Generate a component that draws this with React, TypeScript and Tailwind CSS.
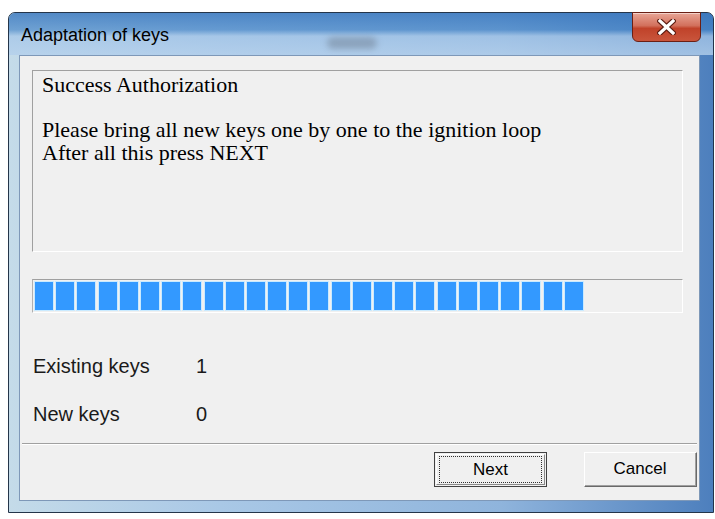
// Win7-style "Adaptation of keys" dialog with segmented progress bar.
import React from "react";

const SEGMENTS = 26;

function CloseButton() {
  return (
    <div className="mr-[12px] mt-[-1px] flex h-[30px] w-[69px] items-center justify-center rounded-b-[6px] border border-[#6b1f14] bg-[linear-gradient(180deg,#e8a596_0%,#d2705c_45%,#c0422a_55%,#c9553c_100%)] shadow-[inset_0_1px_0_rgba(255,255,255,0.5)]">
      <svg width="19" height="16" viewBox="0 0 19 16" aria-hidden>
        <path d="M3 2 L16 14 M16 2 L3 14" stroke="#5a1a10" strokeWidth="5.5" strokeLinecap="square" />
        <path d="M3 2 L16 14 M16 2 L3 14" stroke="#ffffff" strokeWidth="3.2" strokeLinecap="square" />
      </svg>
    </div>
  );
}

export default function App() {
  return (
    <div className="h-[519px] w-[715px] overflow-hidden bg-white pl-[8px] pt-[12px]">
      {/* window frame */}
      <div className="relative flex h-[501px] w-[706px] flex-col rounded-t-[7px] border border-[#24354a] bg-[linear-gradient(90deg,#c4dbe9_0%,#a9c8e6_30%,#8fb4dc_70%,#4d7fbd_100%)]">
        {/* title bar */}
        <div className="flex h-[42px] items-start justify-between rounded-t-[6px] bg-[linear-gradient(180deg,rgba(55,118,190,0.8)_0%,rgba(65,130,198,0.65)_40%,rgba(165,198,232,0.75)_55%,rgba(180,208,236,0.8)_100%)]">
          <span className="ml-[12px] mt-[11px] font-['Liberation_Sans',Arial,sans-serif] text-[18px] leading-[22px] text-black">
            Adaptation of keys
          </span>
          <CloseButton />
        </div>
        <div className="pointer-events-none absolute left-[318px] top-[24px] h-[12px] w-[50px] rounded-full bg-[#6f7f92] opacity-50 blur-[3px]" />

        {/* client area */}
        <div className="mb-[11px] ml-[10px] mr-[13px] flex flex-1 flex-col border border-[#7e98b8] bg-[#f0f0f0]">
          {/* message box */}
          <div className="ml-[12px] mt-[14px] h-[182px] w-[651px] border-b border-l border-r border-t border-b-white border-l-[#a0a0a0] border-r-white border-t-[#a0a0a0] pl-[9px] pt-[3px] font-['Liberation_Serif','Times_New_Roman',serif] text-[22px] leading-[22.5px] text-black">
            <p className="h-[22.5px]">Success Authorization</p>
            <p className="h-[22.5px]">&nbsp;</p>
            <p className="h-[22.5px]">Please bring all new keys one by one to the ignition loop</p>
            <p className="h-[22.5px]">After all this press NEXT</p>
          </div>

          {/* progress bar */}
          <div className="ml-[12px] mt-[27px] flex h-[34px] w-[651px] items-stretch gap-[3.2px] border border-b-white border-l-[#b0b0b0] border-r-white border-t-[#a0a0a0] px-[2px] py-[2px]">
            {Array.from({ length: SEGMENTS }).map((_, i) => (
              <div
                key={i}
                className="w-[18px] bg-[#3399ff] shadow-[0_0_0_1px_#c9eaff]"
              />
            ))}
          </div>

          {/* counters */}
          <div className="ml-[13px] mt-[41px] flex flex-col gap-[24px] font-['Liberation_Sans',Arial,sans-serif] text-[20px] leading-[24px] text-[#1a1a1a]">
            <div className="flex">
              <span className="w-[163px]">Existing keys</span>
              <span>1</span>
            </div>
            <div className="flex">
              <span className="w-[163px]">New keys</span>
              <span>0</span>
            </div>
          </div>

          {/* separator */}
          <div className="mx-[2px] mt-[17px] border-b border-t border-b-white border-t-[#a0a0a0]" />

          {/* buttons */}
          <div className="mr-[2px] mt-[7px] flex justify-end gap-[37px] font-['Liberation_Sans',Arial,sans-serif] text-[17px] text-black">
            <button className="flex h-[35px] w-[113px] items-center justify-center border border-[#404040] bg-[#f0f0f0] p-[1px]">
              <span className="flex h-full w-full items-center justify-center border border-b-[#8a8a8a] border-l-white border-r-[#8a8a8a] border-t-white">
                <span className="flex h-[25px] w-[101px] items-center justify-center outline-1 outline-dotted outline-[#303030]">
                  Next
                </span>
              </span>
            </button>
            <button className="flex h-[35px] w-[113px] items-center justify-center border border-b-[#696969] border-l-white border-r-[#696969] border-t-white bg-[#f0f0f0]">
              <span className="flex h-full w-full items-center justify-center border-b border-r border-b-[#a0a0a0] border-r-[#a0a0a0]">
                Cancel
              </span>
            </button>
          </div>
        </div>
      </div>
    </div>
  );
}
